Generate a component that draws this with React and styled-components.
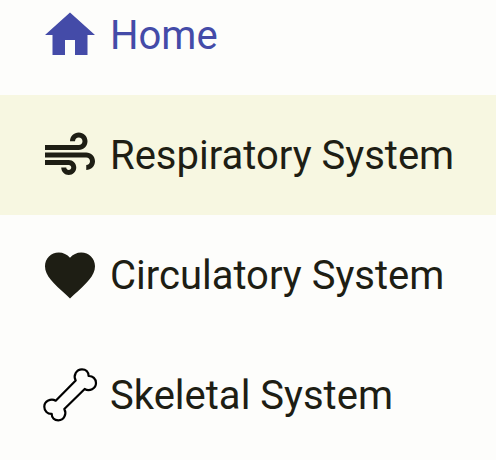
import React from "react";
import styled, { createGlobalStyle } from "styled-components";

const GlobalStyle = createGlobalStyle`
  html, body { margin: 0; padding: 0; background: #fdfdfb; }
  body { height: 460px; overflow: hidden; }
`;

const Menu = styled.nav`
  height: 460px;
  overflow: hidden;
  display: flex;
  flex-direction: column;
  font-family: Roboto, sans-serif;
`;

const List = styled.ul`
  list-style: none;
  margin: -25px 0 0;
  padding: 0;
`;

const Item = styled.li`
  box-sizing: border-box;
  height: 120px;
  padding: 0 40px;
  display: flex;
  align-items: center;
  gap: 10px;
  color: ${(p) => (p.$active ? "#444ba8" : "#1e1e14")};
  background: ${(p) => (p.$hovered ? "#f7f7e1" : "transparent")};
`;

const Icon = styled.svg`
  width: 60px;
  height: 60px;
  flex: none;
  fill: currentColor;
`;

const BoneOutline = styled.path`
  fill: none;
  stroke: #000;
  stroke-width: 2.2;
  stroke-linejoin: round;
`;

const Label = styled.span`
  padding-top: 2px;
  font-size: 40px;
  line-height: 60px;
  white-space: nowrap;
`;

const HomeIcon = () => (
  <Icon viewBox="0 0 24 24">
    <path d="M10 20v-6h4v6h5v-8h3L12 3 2 12h3v8z" />
  </Icon>
);

const AirIcon = () => (
  <Icon viewBox="0 0 24 24">
    <path d="M14.5 17c0 1.65-1.35 3-3 3s-3-1.35-3-3h2c0 .55.45 1 1 1s1-.45 1-1-.45-1-1-1H2v-2h9.5c1.65 0 3 1.35 3 3zM19 6.5C19 4.57 17.43 3 15.5 3S12 4.57 12 6.5h2c0-.83.67-1.5 1.5-1.5s1.5.67 1.5 1.5S16.33 8 15.5 8H2v2h13.5c1.93 0 3.5-1.57 3.5-3.5zm-.5 4.5H2v2h16.5c.83 0 1.5.67 1.5 1.5s-.67 1.5-1.5 1.5v2c1.93 0 3.5-1.57 3.5-3.5S20.43 11 18.5 11z" />
  </Icon>
);

const HeartIcon = () => (
  <Icon viewBox="0 0 24 24">
    <path d="M12 21.35l-1.45-1.32C5.4 15.36 2 12.28 2 8.5 2 5.42 4.42 3 7.5 3c1.74 0 3.41.81 4.5 2.09C13.09 3.81 14.76 3 16.5 3 19.58 3 22 5.42 22 8.5c0 3.78-3.4 6.86-8.55 11.54L12 21.35z" />
  </Icon>
);

const BoneIcon = () => (
  <Icon viewBox="0 0 60 60">
    <BoneOutline d="M35.7 15.5L15.7 35.7C11 33 4.3 36 4.3 41.7C4.3 46 7.5 49 11.7 48.8C11.7 53 14.5 55.3 18.3 55.3C24 55.3 27 49 24.3 44L44.7 24C49.4 26.7 56 23.7 56 18C56 13.8 52.8 10.8 48.6 11C48.6 6.8 45.8 4.3 42 4.3C36.3 4.3 33 10.5 35.7 15.5Z" />
  </Icon>
);

const items = [
  { label: "Home", icon: HomeIcon, active: true },
  { label: "Respiratory System", icon: AirIcon, hovered: true },
  { label: "Circulatory System", icon: HeartIcon },
  { label: "Skeletal System", icon: BoneIcon },
];

export default function App() {
  return (
    <Menu>
      <GlobalStyle />
      <List>
        {items.map(({ label, icon: Glyph, active, hovered }) => (
          <Item key={label} $active={active} $hovered={hovered}>
            <Glyph />
            <Label>{label}</Label>
          </Item>
        ))}
      </List>
    </Menu>
  );
}
